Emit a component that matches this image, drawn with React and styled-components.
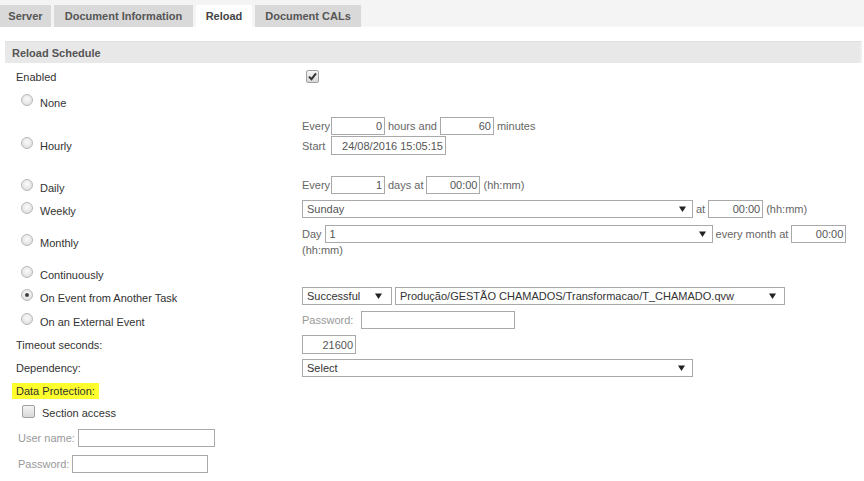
import React from "react";
import styled, { createGlobalStyle } from "styled-components";

const Global = createGlobalStyle`
  html, body { margin: 0; padding: 0; background: #fff; }
  body { font-family: "Liberation Sans", Arial, sans-serif; font-size: 11px; color: #333; }
`;

const Page = styled.div`
  width: 864px;
  height: 481px;
  overflow: hidden;
  background: #fff;
`;

const TabBar = styled.div`
  display: flex;
  gap: 3px;
  height: 27px;
  padding-top: 5px;
  box-sizing: border-box;
  background: #f4f4f4;
  border-bottom: 1px solid #f8f8f8;
`;

const Tab = styled.div`
  width: ${(p) => p.$w}px;
  height: 22px;
  display: flex;
  align-items: center;
  justify-content: center;
  background: ${(p) => (p.$active ? "#fff" : "#d9d9d9")};
  color: ${(p) => (p.$active ? "#444" : "#555")};
  font-weight: bold;
  font-size: 11px;
`;

const SectionHeader = styled.div`
  margin: 14px 2px 0 5px;
  height: 22px;
  box-sizing: border-box;
  display: flex;
  align-items: center;
  padding-left: 7px;
  background: #e8e8e8;
  border-top: 1px solid #e0e0e0;
  border-right: 2px solid #efefef;
  color: #555;
  font-weight: bold;
  font-size: 11px;
`;

const Form = styled.div`
  padding: 2px 6px 0 16px;
`;

const Row = styled.div`
  display: grid;
  grid-template-columns: 286px 1fr;
  height: ${(p) => p.$h}px;
  align-items: center;
`;

const Left = styled.div`
  display: flex;
  align-items: center;
  align-self: ${(p) => p.$align || "center"};
  padding-top: ${(p) => p.$pt || 0}px;
  color: #333;
`;

const Right = styled.div`
  display: flex;
  flex-wrap: wrap;
  align-items: center;
  align-self: ${(p) => p.$align || "center"};
  padding-top: ${(p) => p.$pt || 0}px;
  column-gap: 3px;
  row-gap: 1px;
  color: #666;
`;

const Line = styled.div`
  display: flex;
  align-items: center;
  gap: 3px;
  width: 100%;
`;

const FixedLabel = styled.span`
  width: 26px;
  color: #666;
`;

const Muted = styled.span`
  color: ${(p) => (p.$light ? "#999" : "#666")};
  margin-left: ${(p) => p.$ml || 0}px;
  margin-right: ${(p) => p.$mr || 0}px;
`;

const OptionLabel = styled.span`
  padding-top: ${(p) => p.$drop || 6}px;
`;

const Radio = styled.span`
  width: 12px;
  height: 12px;
  box-sizing: border-box;
  border-radius: 50%;
  border: 1px solid #b8b8b8;
  background: radial-gradient(circle at 50% 40%, #fbfbfb 0%, #e6e6e6 60%, #d6d6d6 100%);
  margin: 0 7px 0 5px;
  display: flex;
  align-items: center;
  justify-content: center;
  flex: none;
  &::after {
    content: "";
    display: ${(p) => (p.$checked ? "block" : "none")};
    width: 4px;
    height: 4px;
    border-radius: 50%;
    background: radial-gradient(circle, #333 0%, #555 100%);
  }
`;

const CheckBox = styled.span`
  width: 13px;
  height: 13px;
  box-sizing: border-box;
  border: 1px solid #a0a0a0;
  border-radius: 2px;
  background: linear-gradient(#f4f4f4, #d8d8d8);
  margin-left: ${(p) => p.$ml || 0}px;
  margin-right: ${(p) => p.$mr || 0}px;
  display: flex;
  align-items: center;
  justify-content: center;
  flex: none;
`;

const Input = styled.div`
  width: ${(p) => p.$w}px;
  height: ${(p) => p.$h || 18}px;
  box-sizing: border-box;
  border: 1px solid #a9a9a9;
  background: #fff;
  display: flex;
  align-items: center;
  justify-content: flex-end;
  padding-right: 2px;
  color: #555;
  font-size: 11px;
  flex: none;
`;

const Select = styled.div`
  width: ${(p) => p.$w}px;
  height: 18px;
  box-sizing: border-box;
  border: 1px solid #a9a9a9;
  background: #fff;
  display: flex;
  align-items: center;
  justify-content: space-between;
  padding: 0 ${(p) => p.$pr || 6}px 0 4px;
  color: ${(p) => (p.$grey ? "#555" : "#333")};
  font-size: 11px;
  flex: none;
`;

const Highlight = styled.span`
  background: #ffff2e;
  padding: 2px 4px 2px 4px;
  margin-left: -4px;
  color: #333;
`;

const Arrow = () => (
  <svg width="7" height="6" viewBox="0 0 7 6">
    <path d="M0 0.5 H7 L3.5 6 Z" fill="#222" />
  </svg>
);

const Check = () => (
  <svg width="9" height="9" viewBox="0 0 9 9">
    <path d="M1 4.6 L3.5 7.2 L8 1.3" fill="none" stroke="#333" strokeWidth="2" />
  </svg>
);

const RadioRow = ({ h, label, checked, children }) => (
  <Row $h={h}>
    <Left>
      <Radio $checked={checked} />
      <OptionLabel>{label}</OptionLabel>
    </Left>
    <Right $pt={1}>{children}</Right>
  </Row>
);

export default function App() {
  return (
    <Page>
      <Global />
      <TabBar>
        <Tab $w={51}>Server</Tab>
        <Tab $w={139}>Document Information</Tab>
        <Tab $w={56} $active>Reload</Tab>
        <Tab $w={106}>Document CALs</Tab>
      </TabBar>
      <SectionHeader>Reload Schedule</SectionHeader>
      <Form>
        <Row $h={22}>
          <Left $pt={1}>Enabled</Left>
          <Right>
            <CheckBox $ml={4}>
              <Check />
            </CheckBox>
          </Right>
        </Row>
        <RadioRow h={26} label="None" />
        <Row $h={60}>
          <Left $align="start" $pt={21}>
            <Radio />
            <OptionLabel>Hourly</OptionLabel>
          </Left>
          <Right $align="start" $pt={4}>
            <Line>
              <FixedLabel>Every</FixedLabel>
              <Input $w={54}>0</Input>
              <span>hours and</span>
              <Input $w={54}>60</Input>
              <span>minutes</span>
            </Line>
            <Line>
              <FixedLabel>Start</FixedLabel>
              <Input $w={115} $h={19}>24/08/2016 15:05:15</Input>
            </Line>
          </Right>
        </Row>
        <RadioRow h={23} label="Daily">
          <FixedLabel>Every</FixedLabel>
          <Input $w={54}>1</Input>
          <span>days at</span>
          <Input $w={54}>00:00</Input>
          <span>(hh:mm)</span>
        </RadioRow>
        <RadioRow h={24} label="Weekly">
          <Select $w={391} $grey>
            Sunday
            <Arrow />
          </Select>
          <span>at</span>
          <Input $w={55}>00:00</Input>
          <span>(hh:mm)</span>
        </RadioRow>
        <RadioRow h={40} label="Monthly">
          <span>Day</span>
          <Select $w={388} $grey>
            1
            <Arrow />
          </Select>
          <span>every month at</span>
          <Input $w={55}>00:00</Input>
          <span>(hh:mm)</span>
        </RadioRow>
        <RadioRow h={23} label="Continuously" />
        <RadioRow h={24} label="On Event from Another Task" checked>
          <Select $w={90} $pr={9}>
            Successful
            <Arrow />
          </Select>
          <Select $w={390} $pr={8}>
            Produção/GESTÃO CHAMADOS/Transformacao/T_CHAMADO.qvw
            <Arrow />
          </Select>
        </RadioRow>
        <RadioRow h={24} label="On an External Event">
          <Muted $light $mr={5}>Password:</Muted>
          <Input $w={154} />
        </RadioRow>
        <Row $h={25}>
          <Left $pt={2}>Timeout seconds:</Left>
          <Right $pt={2}>
            <Input $w={54} $h={19}>21600</Input>
          </Right>
        </Row>
        <Row $h={23}>
          <Left $pt={1}>Dependency:</Left>
          <Right $pt={1}>
            <Select $w={391} $pr={7}>
              Select
              <Arrow />
            </Select>
          </Right>
        </Row>
        <Row $h={20}>
          <Left $pt={3}>
            <Highlight>Data Protection:</Highlight>
          </Left>
        </Row>
        <Row $h={24}>
          <Left>
            <CheckBox $ml={6} $mr={7} />
            <OptionLabel $drop={3}>Section access</OptionLabel>
          </Left>
        </Row>
        <Row $h={26}>
          <Left $pt={3}>
            <Muted $light $ml={2} $mr={3}>User name:</Muted>
            <Input $w={137} />
          </Left>
        </Row>
        <Row $h={28}>
          <Left $pt={2}>
            <Muted $light $ml={2} $mr={3}>Password:</Muted>
            <Input $w={136} />
          </Left>
        </Row>
      </Form>
    </Page>
  );
}
